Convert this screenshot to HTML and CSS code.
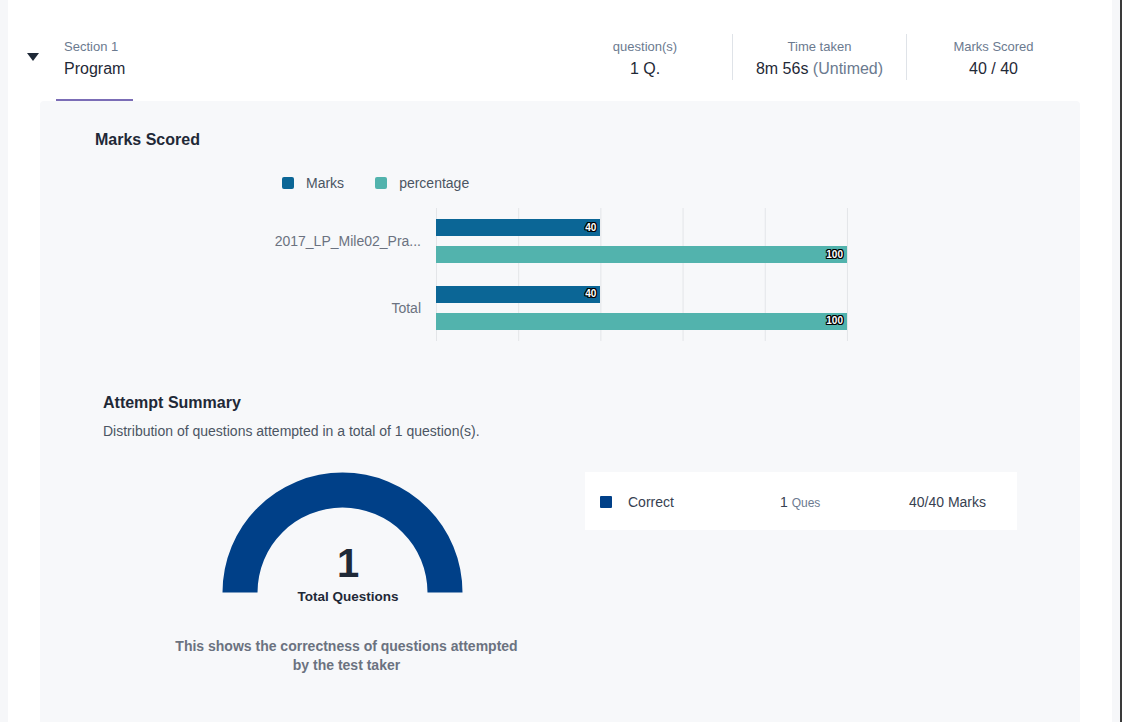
FILE: index.html
```html
<!DOCTYPE html>
<html lang="en">
<head>
<meta charset="utf-8">
<title>Section report</title>
<link rel="stylesheet" href="styles.css">
</head>
<body>
<div class="card">
  <div class="section-head">
    <span class="caret"></span>
    <div class="title">
      <div class="sec-label">Section 1</div>
      <div class="sec-name">Program</div>
    </div>
    <div class="stats">
      <div class="stat">
        <div class="stat-label">question(s)</div>
        <div class="stat-value">1 Q.</div>
      </div>
      <div class="stat">
        <div class="stat-label">Time taken</div>
        <div class="stat-value">8m 56s <span class="muted">(Untimed)</span></div>
      </div>
      <div class="stat">
        <div class="stat-label">Marks Scored</div>
        <div class="stat-value">40 / 40</div>
      </div>
    </div>
  </div>

  <div class="panel">
    <h2 class="panel-title">Marks Scored</h2>
    <div class="legend">
      <div class="legend-item"><span class="swatch marks"></span>Marks</div>
      <div class="legend-item"><span class="swatch pct"></span>percentage</div>
    </div>
    <div class="chart">
      <div class="cats">
        <div class="cat">2017_LP_Mile02_Pra...</div>
        <div class="cat">Total</div>
      </div>
      <div class="plot">
        <div class="group">
          <div class="bar marks" style="width:40%"><span class="val">40</span></div>
          <div class="bar pct" style="width:100%"><span class="val">100</span></div>
        </div>
        <div class="group">
          <div class="bar marks" style="width:40%"><span class="val">40</span></div>
          <div class="bar pct" style="width:100%"><span class="val">100</span></div>
        </div>
      </div>
    </div>

    <div class="attempt">
      <h3 class="attempt-title">Attempt Summary</h3>
      <p class="attempt-sub">Distribution of questions attempted in a total of 1 question(s).</p>
      <div class="attempt-row">
        <div class="donut-col">
          <div class="donut">
            <svg width="241" height="121" viewBox="0 0 241 121">
              <path d="M0.5 120.5 A120 120 0 0 1 240.5 120.5 L205.5 120.5 A85 85 0 0 0 35.5 120.5 Z" fill="#004088"/>
            </svg>
            <div class="donut-num">1</div>
            <div class="donut-label">Total Questions</div>
          </div>
          <p class="caption">This shows the correctness of questions attempted<br>by the test taker</p>
        </div>
        <div class="result-box">
          <span class="res-swatch"></span>
          <span class="res-name">Correct</span>
          <span class="res-q">1 <small>Ques</small></span>
          <span class="res-m">40/40 Marks</span>
        </div>
      </div>
    </div>
  </div>
</div>
</body>
</html>
```
FILE: styles.css
```css
* { box-sizing: border-box; }
html, body { height: 100%; }
body {
  margin: 0;
  padding: 0 8px;
  background: #f6f7f9;
  border-right: 2px solid #3a3a3a;
  font-family: "Liberation Sans", Arial, sans-serif;
  color: #1f2937;
  overflow: hidden;
}
.card {
  background: #fff;
  min-height: 100%;
  display: flex;
  flex-direction: column;
}
.section-head {
  display: flex;
  align-items: flex-start;
  padding: 34px 32px 0 19px;
}
.caret {
  width: 0;
  height: 0;
  margin-top: 19px;
  border-left: 6px solid transparent;
  border-right: 6px solid transparent;
  border-top: 8px solid #1f2937;
}
.title {
  margin-left: 17px;
  padding: 4px 8px 19px;
  border-bottom: 2px solid #7b6db6;
}
.sec-label { font-size: 13px; line-height: 18px; color: #6b7a8f; }
.sec-name { font-size: 16px; line-height: 22px; margin-top: 2px; color: #1f2937; }
.stats { margin-left: auto; display: flex; }
.stat {
  width: 174px;
  padding-top: 4px;
  height: 46px;
  text-align: center;
}
.stat + .stat { border-left: 1px solid #dfe3e8; }
.stat-label { font-size: 13px; line-height: 18px; color: #6b7a8f; }
.stat-value { font-size: 16px; line-height: 22px; margin-top: 2px; color: #1f2937; }
.muted { color: #6b7a8f; }

.panel {
  flex: 1;
  margin: 0 32px;
  background: #f7f8fa;
  border-radius: 4px 4px 0 0;
  padding: 29px 0 0 55px;
}
.panel-title {
  margin: 0;
  font-size: 16px;
  line-height: 20px;
  font-weight: bold;
  color: #1f2937;
}
.legend {
  display: flex;
  align-items: center;
  gap: 31px;
  margin-top: 25px;
  padding-left: 187px;
  font-size: 14px;
  line-height: 16px;
  color: #4b5563;
}
.legend-item { display: flex; align-items: center; }
.swatch {
  width: 12px;
  height: 12px;
  border-radius: 2px;
  margin-right: 12px;
}
.marks { background: #0b6696; }
.pct { background: #52b3ad; }

.chart { display: flex; margin-top: 17px; }
.cats { width: 326px; display: flex; flex-direction: column; }
.cat {
  height: 66.5px;
  display: flex;
  align-items: center;
  justify-content: flex-end;
  font-size: 14px;
  color: #6b7280;
}
.plot {
  margin-left: 15px;
  width: 412px;
  height: 133px;
  padding-right: 1px;
  background-image: linear-gradient(90deg, #e3e5e8 1px, transparent 1px);
  background-size: 82.2px 100%;
  display: flex;
  flex-direction: column;
}
.group {
  height: 66.5px;
  display: flex;
  flex-direction: column;
  justify-content: center;
  gap: 10px;
}
.bar {
  height: 17px;
  display: flex;
  align-items: center;
  justify-content: flex-end;
  padding-right: 4px;
}
.val {
  font-size: 10px;
  font-weight: bold;
  color: #fff;
  line-height: 12px;
  text-shadow: -1px 0 #000, 1px 0 #000, 0 -1px #000, 0 1px #000, 1px 1px #000, -1px -1px #000, 1px -1px #000, -1px 1px #000;
}

.attempt { margin-top: 52px; padding-left: 8px; }
.attempt-title {
  margin: 0;
  font-size: 16px;
  line-height: 20px;
  font-weight: bold;
  color: #1f2937;
}
.attempt-sub {
  margin: 8px 0 0;
  font-size: 14px;
  line-height: 20px;
  color: #4b5563;
}
.attempt-row { display: flex; margin-top: 31px; }
.donut-col {
  width: 482px;
  display: flex;
  flex-direction: column;
  align-items: center;
}
.donut { position: relative; width: 241px; height: 121px; margin-right: 4px; }
.donut svg { display: block; }
.donut-num {
  position: absolute;
  left: 12px;
  right: 0;
  top: 71px;
  text-align: center;
  font-size: 40px;
  line-height: 40px;
  font-weight: bold;
  color: #1f2937;
}
.donut-label {
  position: absolute;
  left: 12px;
  right: 0;
  top: 115px;
  text-align: center;
  font-size: 13.5px;
  line-height: 20px;
  font-weight: bold;
  color: #1f2937;
}
.caption {
  margin: 44px 0 0 5px;
  text-align: center;
  font-size: 14px;
  line-height: 19px;
  font-weight: bold;
  color: #6b7280;
}
.result-box {
  width: 432px;
  height: 58px;
  background: #fff;
  display: flex;
  align-items: center;
  padding: 2px 0 0 15px;
  font-size: 14px;
  color: #374151;
}
.res-swatch {
  width: 12px;
  height: 12px;
  background: #004088;
  border-radius: 1px;
}
.res-name { margin-left: 16px; width: 152px; }
.res-q { width: 129px; }
.res-q small { font-size: 12px; color: #6b7a8f; }
```
